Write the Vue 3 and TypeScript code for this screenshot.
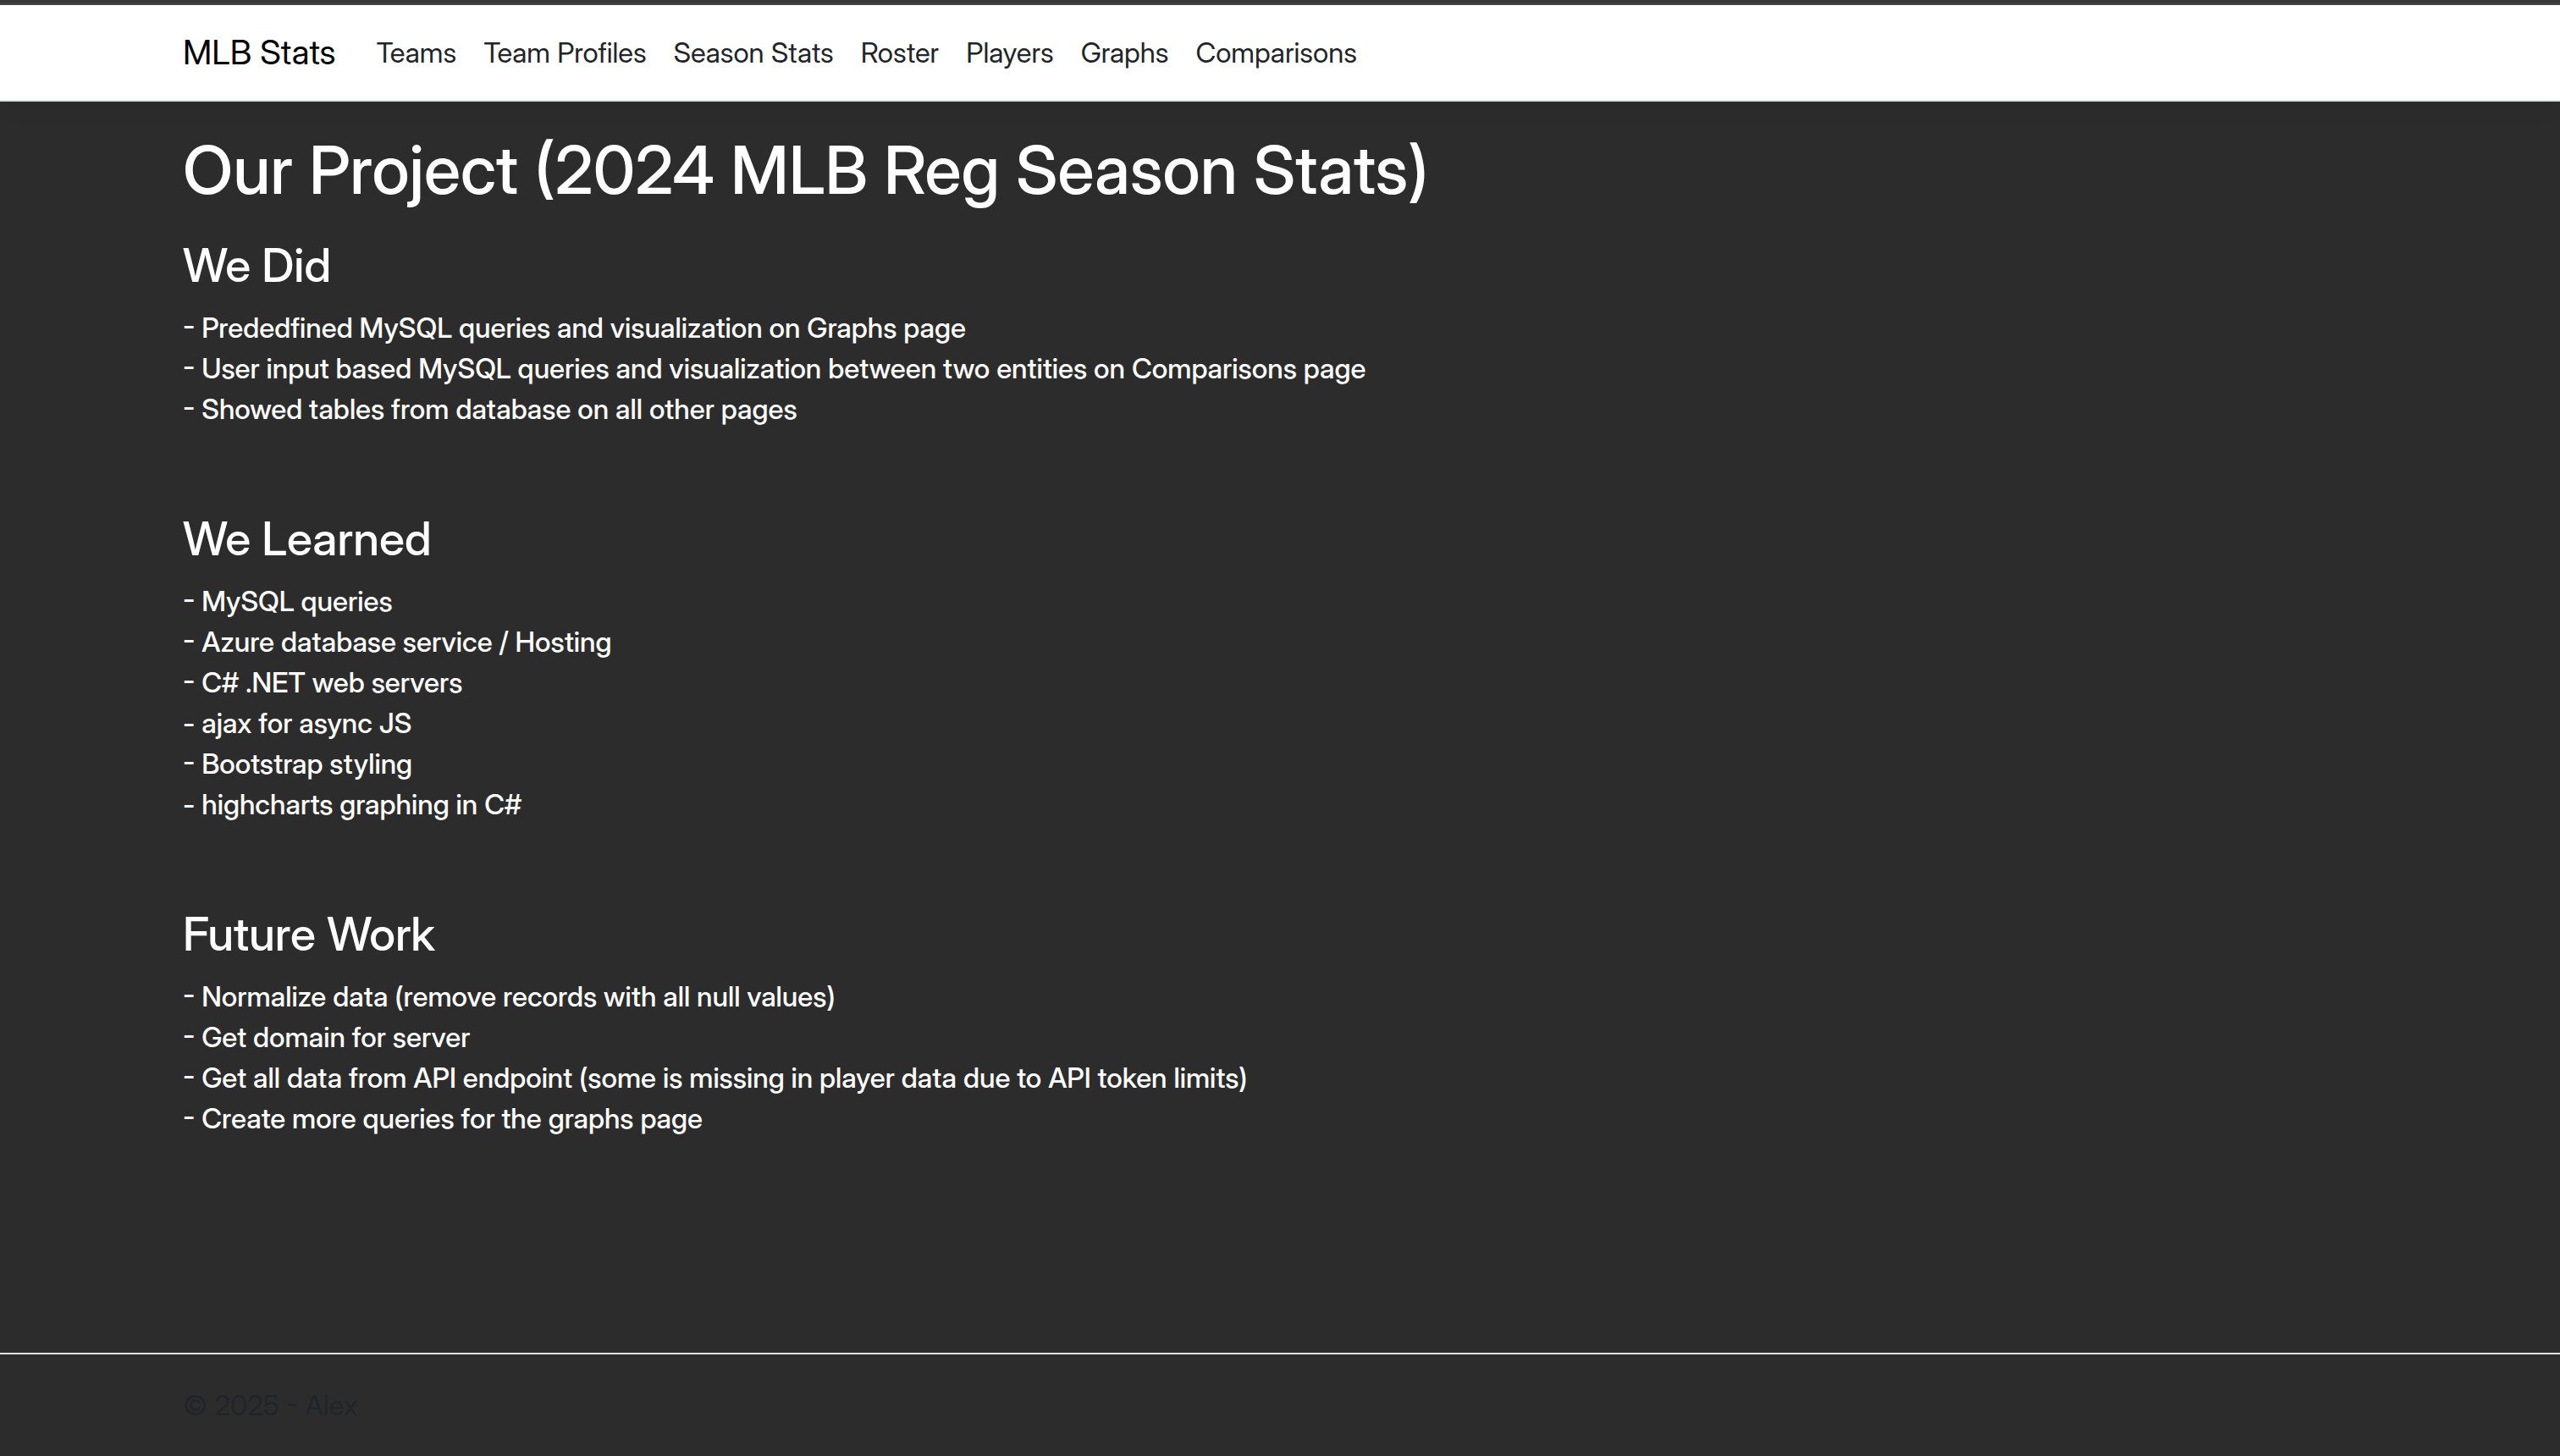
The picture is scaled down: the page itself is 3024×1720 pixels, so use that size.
<script setup lang="ts">
interface Section {
  title: string
  items: string[]
}

const links: string[] = ['Teams', 'Team Profiles', 'Season Stats', 'Roster', 'Players', 'Graphs', 'Comparisons']

const sections: Section[] = [
  {
    title: 'We Did',
    items: [
      'Prededfined MySQL queries and visualization on Graphs page',
      'User input based MySQL queries and visualization between two entities on Comparisons page',
      'Showed tables from database on all other pages',
    ],
  },
  {
    title: 'We Learned',
    items: [
      'MySQL queries',
      'Azure database service / Hosting',
      'C# .NET web servers',
      'ajax for async JS',
      'Bootstrap styling',
      'highcharts graphing in C#',
    ],
  },
  {
    title: 'Future Work',
    items: [
      'Normalize data (remove records with all null values)',
      'Get domain for server',
      'Get all data from API endpoint (some is missing in player data due to API token limits)',
      'Create more queries for the graphs page',
    ],
  },
]
</script>

<template>
  <div class="page">
    <header>
      <nav class="navbar">
        <div class="container nav-row">
          <a class="brand" href="#">MLB Stats</a>
          <ul class="nav-list">
            <li v-for="link in links" :key="link">
              <a class="nav-link" href="#">{{ link }}</a>
            </li>
          </ul>
        </div>
      </nav>
    </header>

    <main class="container content">
      <h1>Our Project (2024 MLB Reg Season Stats)</h1>
      <section v-for="section in sections" :key="section.title">
        <h2>{{ section.title }}</h2>
        <ul class="items">
          <li v-for="item in section.items" :key="item">- {{ item }}</li>
        </ul>
      </section>
    </main>

    <footer class="footer">
      <div class="container">&copy; 2025 - Alex</div>
    </footer>
  </div>
</template>

<style>
body {
  margin: 0;
  background: #2c2c2c;
}
</style>

<style scoped>
.page {
  display: flex;
  flex-direction: column;
  box-sizing: border-box;
  min-height: 100vh;
  border-top: 4px solid #3b3b3b;
  background: #2c2c2c;
  color: #fff;
  font-family: "Inter Display", Inter, "Liberation Sans", sans-serif;
  font-size: 33px;
  line-height: 48px;
}

.container {
  box-sizing: border-box;
  width: 100%;
  max-width: 2640px;
  margin: 0 auto;
  padding: 0 24px;
}

ul {
  margin: 0;
  padding: 0;
  list-style: none;
}

.navbar {
  padding: 16px 0;
  border-top: 2px solid #454345;
  border-bottom: 2px solid #dee2e6;
  background: #fff;
  box-shadow: 0 8px 24px rgba(0, 0, 0, 0.05);
}

.nav-row,
.nav-list {
  display: flex;
  align-items: center;
}

.brand {
  margin-right: 32px;
  padding: 10px 0;
  color: #000;
  font-size: 40px;
  line-height: 60px;
  text-decoration: none;
}

.nav-link {
  display: block;
  padding: 16px;
  color: #212529;
  text-decoration: none;
}

.content {
  flex: 1;
  padding-top: 32px;
  font-weight: 500;
}

h1,
h2 {
  margin: 0 0 16px;
  font-weight: 500;
}

h1 {
  margin-bottom: 32px;
  font-size: 79px;
  line-height: 96px;
}

h2 {
  font-size: 55px;
  line-height: 67px;
}

.items {
  margin-bottom: 96px;
}

.footer {
  border-top: 2px solid #dee2e6;
  color: #212529;
  line-height: 120px;
}
</style>
